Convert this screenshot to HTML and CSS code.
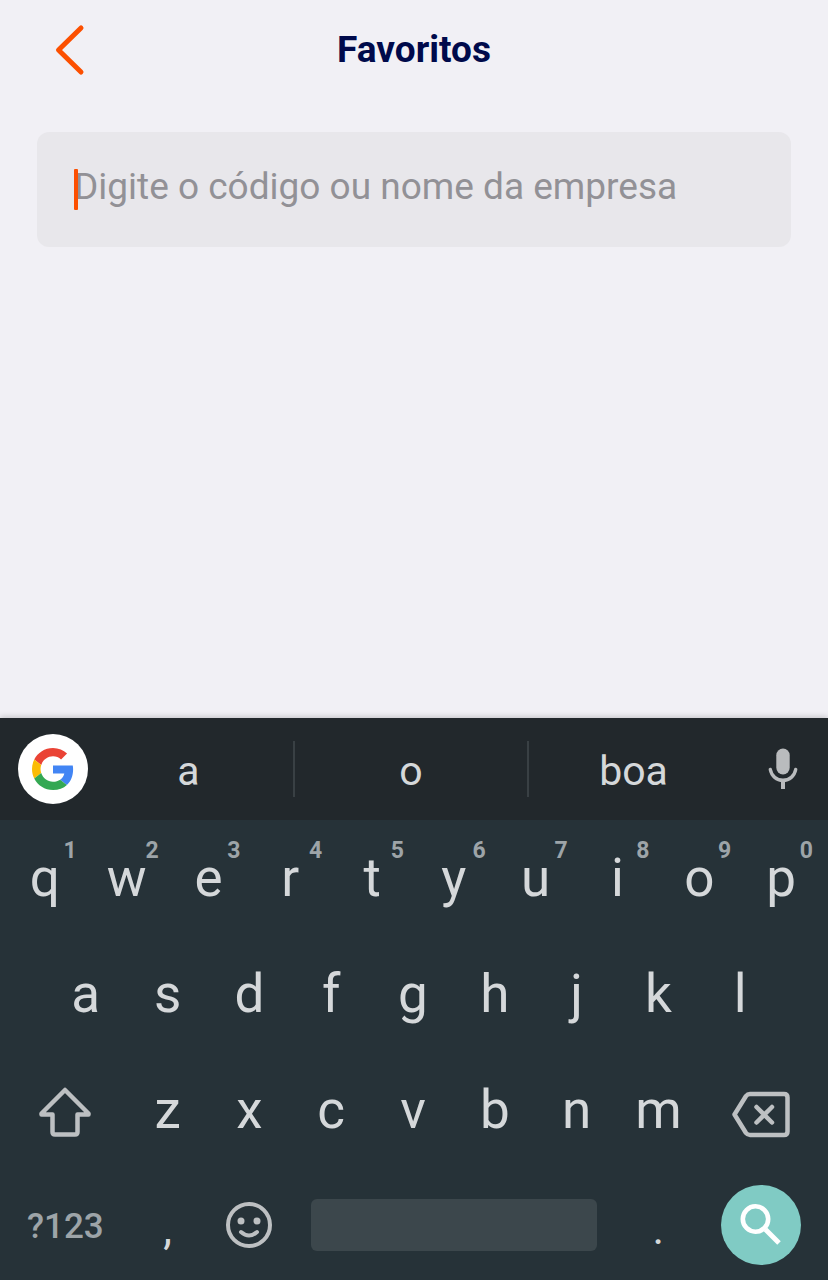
FILE: index.html
```html
<!DOCTYPE html>
<html lang="pt-BR">
<head>
<meta charset="utf-8">
<meta name="viewport" content="width=device-width, initial-scale=1">
<title>Favoritos</title>
<link rel="stylesheet" href="styles.css">
</head>
<body>
<header class="header">
  <button class="back" type="button" aria-label="Voltar">
    <svg width="32" height="52" viewBox="0 0 32 52"><path d="M27 4 4.500 26 27 48" fill="none" stroke="#fc4f00" stroke-width="5" stroke-linecap="round" stroke-linejoin="round"/></svg>
  </button>
  <h1 class="title">Favoritos</h1>
</header>
<main class="content">
  <div class="field">
    <input class="field-input" type="text" aria-label="Digite o código ou nome da empresa" placeholder="Digite o código ou nome da empresa">
    <span class="caret"></span>
  </div>
</main>
<section class="keyboard" aria-label="Teclado">
  <div class="suggestions">
    <button class="google" type="button" aria-label="Google">
      <svg width="42" height="42" viewBox="0 0 48 48">
        <path fill="#EA4335" d="M24 9.5c3.54 0 6.71 1.22 9.21 3.6l6.85-6.85C35.9 2.38 30.47 0 24 0 14.62 0 6.51 5.38 2.56 13.22l7.98 6.19C12.43 13.72 17.74 9.5 24 9.5z"/>
        <path fill="#4285F4" d="M46.98 24.55c0-1.57-.15-3.09-.38-4.55H24v9.02h12.94c-.58 2.96-2.26 5.48-4.78 7.18l7.73 6c4.51-4.18 7.09-10.36 7.09-17.65z"/>
        <path fill="#FBBC05" d="M10.53 28.59c-.48-1.45-.76-2.99-.76-4.59s.27-3.14.76-4.59l-7.98-6.19C.92 16.46 0 20.12 0 24c0 3.88.92 7.54 2.56 10.78l7.97-6.19z"/>
        <path fill="#34A853" d="M24 48c6.48 0 11.93-2.13 15.89-5.81l-7.73-6c-2.15 1.45-4.92 2.3-8.16 2.3-6.26 0-11.57-4.22-13.47-9.91l-7.98 6.19C6.51 42.62 14.62 48 24 48z"/>
      </svg>
    </button>
    <button class="word" type="button">a</button>
    <button class="word word-main" type="button">o</button>
    <button class="word" type="button">boa</button>
    <button class="mic" type="button" aria-label="Entrada por voz">
      <svg width="32" height="44" viewBox="0 0 32 44"><rect x="9.300" y="1.500" width="13.400" height="26" rx="6.700" fill="#b9bbbd"/><path d="M3.300 22.500C4.500 29 9.500 33.300 16 33.300S27.500 29 28.700 22.500" fill="none" stroke="#b9bbbd" stroke-width="3.400" stroke-linecap="round"/><path d="M16 34v8" stroke="#b9bbbd" stroke-width="4"/></svg>
    </button>
  </div>
  <div class="keys">
    <div class="row">
      <button class="key" type="button">q<span class="hint">1</span></button>
      <button class="key" type="button">w<span class="hint">2</span></button>
      <button class="key" type="button">e<span class="hint">3</span></button>
      <button class="key" type="button">r<span class="hint">4</span></button>
      <button class="key" type="button">t<span class="hint">5</span></button>
      <button class="key" type="button">y<span class="hint">6</span></button>
      <button class="key" type="button">u<span class="hint">7</span></button>
      <button class="key" type="button">i<span class="hint">8</span></button>
      <button class="key" type="button">o<span class="hint">9</span></button>
      <button class="key" type="button">p<span class="hint">0</span></button>
    </div>
    <div class="row">
      <button class="key key-first" type="button">a</button>
      <button class="key" type="button">s</button>
      <button class="key" type="button">d</button>
      <button class="key" type="button">f</button>
      <button class="key" type="button">g</button>
      <button class="key" type="button">h</button>
      <button class="key" type="button">j</button>
      <button class="key" type="button">k</button>
      <button class="key" type="button">l</button>
    </div>
    <div class="row">
      <button class="key key-wide" type="button" aria-label="Shift">
        <svg width="52" height="56" viewBox="0 0 52 56"><path d="M26 8 2.500 31.500V32.500H13.500V50Q13.500 52.500 16 52.500H36Q38.500 52.500 38.500 50V32.500H49.500V31.500Z" fill="none" stroke="#bdc0c2" stroke-width="4.500" stroke-linejoin="round"/></svg>
      </button>
      <button class="key" type="button">z</button>
      <button class="key" type="button">x</button>
      <button class="key" type="button">c</button>
      <button class="key" type="button">v</button>
      <button class="key" type="button">b</button>
      <button class="key" type="button">n</button>
      <button class="key" type="button">m</button>
      <button class="key key-wide" type="button" aria-label="Apagar">
        <svg width="58" height="56" viewBox="0 0 58 56"><path d="M2.500 32.500 14 14Q15.500 12 18 12H52Q55.500 12 55.500 15.500V49.500Q55.500 53 52 53H18Q15.500 53 14 51ZM24.500 25 40 40.500M40 25 24.500 40.500" fill="none" stroke="#bdc0c2" stroke-width="4.500" stroke-linecap="round" stroke-linejoin="round"/></svg>
      </button>
    </div>
    <div class="row row-last">
      <button class="key key-wide key-symbols" type="button">?123</button>
      <button class="key key-punct" type="button">,</button>
      <button class="key" type="button" aria-label="Emoji">
        <svg width="48" height="48" viewBox="0 0 48 48"><g fill="none" stroke="#bdc0c2" stroke-width="4"><circle cx="24" cy="24" r="21"/><path d="M16 31Q24 38 32 31" stroke-linecap="round"/></g><circle cx="16" cy="20" r="3.500" fill="#bdc0c2"/><circle cx="32" cy="20" r="3.500" fill="#bdc0c2"/></svg>
      </button>
      <button class="key key-space" type="button" aria-label="Espaço"><span class="space-bar"></span></button>
      <button class="key key-punct" type="button">.</button>
      <button class="key key-wide" type="button" aria-label="Pesquisar">
        <span class="search"><svg width="80" height="80" viewBox="0 0 80 80" fill="none" stroke="#fff"><circle cx="34.500" cy="34" r="12.700" stroke-width="4.600"/><path d="M44.500 44.500 58 58" stroke-width="5"/></svg></span>
      </button>
    </div>
  </div>
</section>
</body>
</html>
```
FILE: styles.css
```css
* {
  box-sizing: border-box;
}

body {
  margin: 0;
  min-height: 100vh;
  display: flex;
  flex-direction: column;
  background: #f1f0f5;
  font-family: Roboto, "Liberation Sans", sans-serif;
}

button {
  margin: 0;
  padding: 0;
  border: 0;
  background: none;
  color: inherit;
  font: inherit;
}

svg {
  display: block;
}

.header {
  display: grid;
  grid-template-columns: 86px 1fr 86px;
  align-items: center;
  height: 100px;
}

.back {
  justify-self: end;
}

.title {
  margin: 0;
  text-align: center;
  color: #000a4b;
  font-size: 37px;
  font-weight: 700;
  line-height: 44px;
}

.content {
  flex: 1;
  padding: 32px 37px;
}

.field {
  position: relative;
  display: flex;
  border-radius: 12px;
  background: #e8e7eb;
}

.field-input {
  flex: 1;
  min-width: 0;
  height: 115px;
  padding: 0 37px 6px;
  border: 0;
  outline: 0;
  background: none;
  color: #000a4b;
  caret-color: #fc4f00;
  font: 400 37px Roboto, "Liberation Sans", sans-serif;
}

.field-input::placeholder {
  color: #929196;
  opacity: 1;
}

.caret {
  position: absolute;
  top: 37px;
  left: 37px;
  width: 4px;
  height: 41px;
  border-radius: 1px;
  background: #fc4f00;
}

.keyboard {
  color: #d5d8da;
  background: #263238;
  box-shadow: 0 -1px 6px rgba(0, 0, 0, 0.2);
}

.suggestions {
  display: grid;
  grid-template-columns: 84px 1fr 236px 1fr 90px;
  align-items: center;
  height: 102px;
  background: #22282c;
  font-size: 41px;
}

.google {
  display: grid;
  place-items: center;
  width: 70px;
  height: 70px;
  margin-left: 18px;
  border-radius: 50%;
  background: #fff;
}

.word {
  height: 56px;
  padding-top: 4px;
  line-height: 52px;
}

.word-main {
  border: solid #394044;
  border-width: 0 2px;
}

.mic {
  justify-self: center;
}

.keys {
  padding: 0 6px 0 4px;
}

.row {
  display: grid;
  grid-template-columns: repeat(20, 1fr);
  height: 116px;
}

.row-last {
  height: 112px;
  padding-top: 2px;
}

.key {
  position: relative;
  display: flex;
  align-items: center;
  justify-content: center;
  grid-column: span 2;
  min-width: 0;
  font-size: 53px;
  line-height: 64px;
}

.key-first {
  grid-column: 2 / span 2;
}

.key-wide {
  grid-column: span 3;
}

.key-space {
  grid-column: span 8;
  padding: 0 21px;
}

.key-symbols {
  padding-top: 4px;
  color: #9da4a8;
  font-size: 35px;
  font-weight: 500;
}

.key-punct {
  padding-top: 8px;
  font-size: 44px;
}

.hint {
  position: absolute;
  top: 19px;
  right: 9px;
  color: #9da4a8;
  font-size: 23px;
  font-weight: 700;
  line-height: 24px;
}

.space-bar {
  flex: 1;
  height: 52px;
  border-radius: 6px;
  background: #3c474c;
}

.search {
  border-radius: 50%;
  background: #80cbc4;
}
```
